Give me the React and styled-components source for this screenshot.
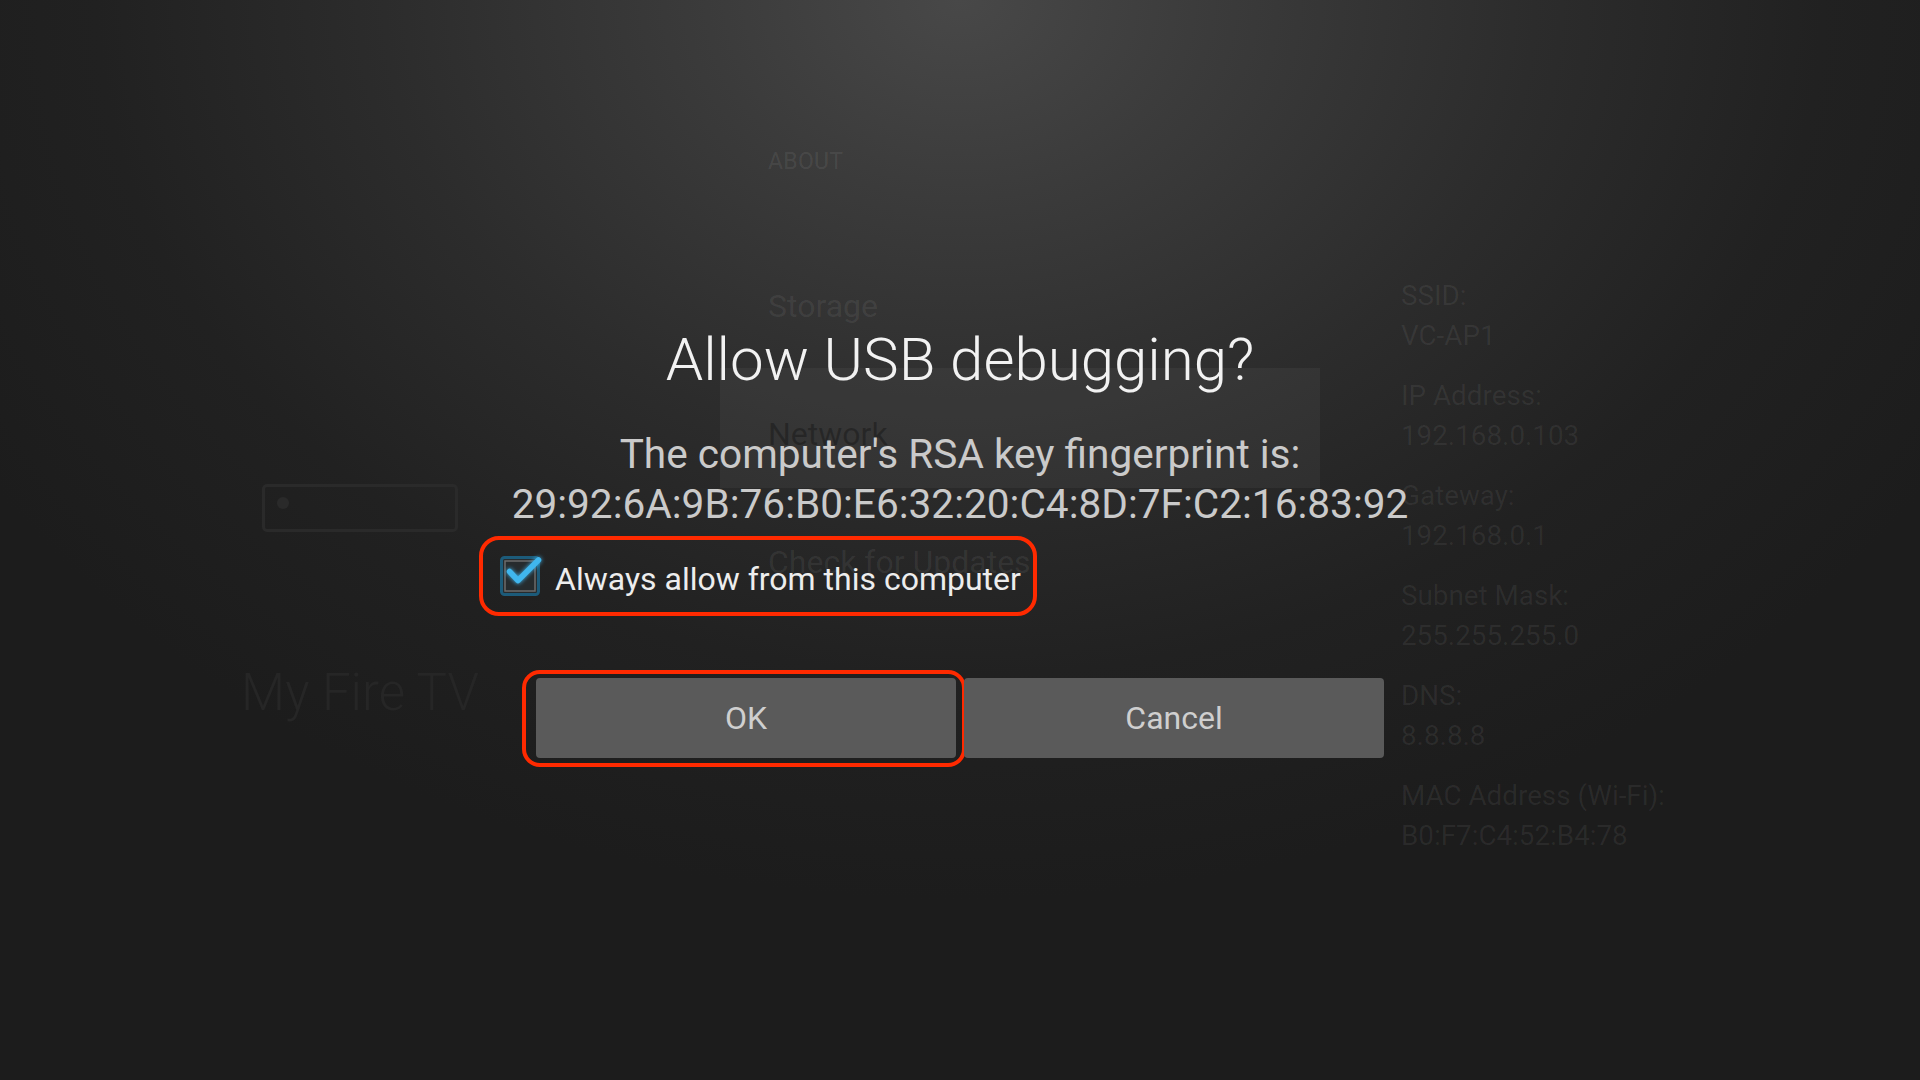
import { createGlobalStyle, styled } from "styled-components";

const GlobalStyle = createGlobalStyle`
  html, body {
    margin: 0;
    padding: 0;
    background: #1c1c1c;
  }
  body {
    font-family: Roboto, "Noto Sans", sans-serif;
  }
`;

const Screen = styled.div`
  position: relative;
  width: 1920px;
  height: 1080px;
  overflow: hidden;
  background: radial-gradient(
      ellipse 1150px 900px at 50% 0%,
      #484848 0%,
      #3b3b3b 22%,
      #2c2c2c 50%,
      #212121 75%,
      #1c1c1c 100%
    ),
    #1c1c1c;
`;

// dimmed settings page behind the dialog
const Backdrop = styled.div`
  display: flex;
  height: 100%;
`;

const LeftPane = styled.div`
  width: 720px;
  display: flex;
  flex-direction: column;
  align-items: center;
  padding-top: 484px;
  box-sizing: border-box;
`;

const DeviceBox = styled.div`
  width: 196px;
  height: 48px;
  box-sizing: border-box;
  border: 3px solid #2a2a2a;
  border-radius: 5px;
  padding: 10px 0 0 12px;
`;

const DeviceDot = styled.div`
  width: 12px;
  height: 12px;
  border-radius: 50%;
  background: #2a2a2a;
`;

const PageTitle = styled.div`
  margin-top: 131px;
  font-size: 51px;
  font-weight: 300;
  line-height: 60px;
  color: #262626;
`;

const MiddlePane = styled.div`
  width: 600px;
  padding-top: 150px;
`;

const SectionLabel = styled.div`
  padding-left: 48px;
  font-size: 23px;
  line-height: 24px;
  letter-spacing: 0.3px;
  color: rgba(255, 255, 255, 0.08);
`;

const Menu = styled.div`
  margin-top: 66px;
  display: flex;
  flex-direction: column;
  gap: 8px;
`;

const MenuItem = styled.div`
  height: 120px;
  box-sizing: border-box;
  padding: 48px 0 0 48px;
  font-size: 32px;
  line-height: 36px;
  background: ${(p) => (p.$selected ? "rgba(255, 255, 255, 0.045)" : "transparent")};
  color: ${(p) => (p.$selected ? "rgba(0, 0, 0, 0.28)" : "rgba(255, 255, 255, 0.07)")};
`;

const RightPane = styled.div`
  padding: 276px 0 0 81px;
  display: flex;
  flex-direction: column;
  gap: 20px;
`;

const InfoGroup = styled.div`
  font-size: 27.8px;
  line-height: 40px;
  color: rgba(255, 255, 255, 0.065);
`;

// dialog over the page
const Overlay = styled.div`
  position: absolute;
  inset: 0;
  display: flex;
  justify-content: center;
`;

const Dialog = styled.div`
  width: 960px;
  margin-top: 324px;
  display: flex;
  flex-direction: column;
`;

const Title = styled.h1`
  margin: 0;
  text-align: center;
  font-size: 60px;
  font-weight: 300;
  line-height: 72px;
  color: #f2f2f2;
`;

const Message = styled.p`
  margin: 33px 0 0;
  text-align: center;
  font-size: 40.6px;
  line-height: 50px;
  color: #cacaca;
`;

const CheckRow = styled.label`
  position: relative;
  align-self: flex-start;
  margin: 12px 0 0 20px;
  height: 72px;
  display: inline-flex;
  align-items: center;
  gap: 13px;
  font-size: 32px;
  color: #ededed;

  &::after {
    content: "";
    position: absolute;
    inset: -5px -16px -3px -21px;
    border: 4px solid #ff2a00;
    border-radius: 20px;
    pointer-events: none;
  }
`;

const CheckLabel = styled.span`
  padding-top: 4px;
`;

const CheckIcon = styled.svg`
  width: 42px;
  height: 42px;
  overflow: visible;
  flex-shrink: 0;
`;

const Buttons = styled.div`
  margin-top: 65px;
  display: flex;
  justify-content: center;
  gap: 8px;
`;

const Button = styled.button`
  position: relative;
  width: 420px;
  height: 80px;
  border: none;
  border-radius: 4px;
  background: #5a5a5a;
  color: #cfcfcf;
  font-family: Roboto, "Noto Sans", sans-serif;
  font-size: 32px;

  ${(p) =>
    p.$marked &&
    `
    &::after {
      content: "";
      position: absolute;
      inset: -8px -10px -9px -14px;
      border: 4px solid #ff2a00;
      border-radius: 18px;
      pointer-events: none;
    }
  `}
`;

const info = [
  ["SSID:", "VC-AP1"],
  ["IP Address:", "192.168.0.103"],
  ["Gateway:", "192.168.0.1"],
  ["Subnet Mask:", "255.255.255.0"],
  ["DNS:", "8.8.8.8"],
  ["MAC Address (Wi-Fi):", "B0:F7:C4:52:B4:78"],
];

const Checkbox = () => (
  <CheckIcon viewBox="0 0 42 42">
    <defs>
      <filter id="glow" x="-50%" y="-50%" width="200%" height="200%">
        <feGaussianBlur stdDeviation="2" result="b" />
        <feMerge>
          <feMergeNode in="b" />
          <feMergeNode in="SourceGraphic" />
        </feMerge>
      </filter>
    </defs>
    <rect x="1.5" y="1.5" width="37" height="37" rx="3" fill="#262b2e" stroke="#1c5b7a" strokeWidth="3" />
    <rect x="5" y="5" width="30" height="30" fill="none" stroke="#6c6c6c" strokeWidth="1.5" />
    <path
      d="M9.5 15.5 L18 24.5 L38.5 4"
      fill="none"
      stroke="#3fb6ee"
      strokeWidth="5.5"
      strokeLinecap="round"
      strokeLinejoin="round"
      filter="url(#glow)"
    />
  </CheckIcon>
);

export default function App() {
  return (
    <>
      <GlobalStyle />
      <Screen>
        <Backdrop>
          <LeftPane>
            <DeviceBox>
              <DeviceDot />
            </DeviceBox>
            <PageTitle>My Fire TV</PageTitle>
          </LeftPane>
          <MiddlePane>
            <SectionLabel>ABOUT</SectionLabel>
            <Menu>
              <MenuItem>Storage</MenuItem>
              <MenuItem $selected>Network</MenuItem>
              <MenuItem>Check for Updates</MenuItem>
            </Menu>
          </MiddlePane>
          <RightPane>
            {info.map(([label, value]) => (
              <InfoGroup key={label}>
                <div>{label}</div>
                <div>{value}</div>
              </InfoGroup>
            ))}
          </RightPane>
        </Backdrop>

        <Overlay>
          <Dialog>
            <Title>Allow USB debugging?</Title>
            <Message>
              The computer's RSA key fingerprint is:
              <br />
              29:92:6A:9B:76:B0:E6:32:20:C4:8D:7F:C2:16:83:92
            </Message>
            <CheckRow>
              <Checkbox />
              <CheckLabel>Always allow from this computer</CheckLabel>
            </CheckRow>
            <Buttons>
              <Button $marked>OK</Button>
              <Button>Cancel</Button>
            </Buttons>
          </Dialog>
        </Overlay>
      </Screen>
    </>
  );
}
